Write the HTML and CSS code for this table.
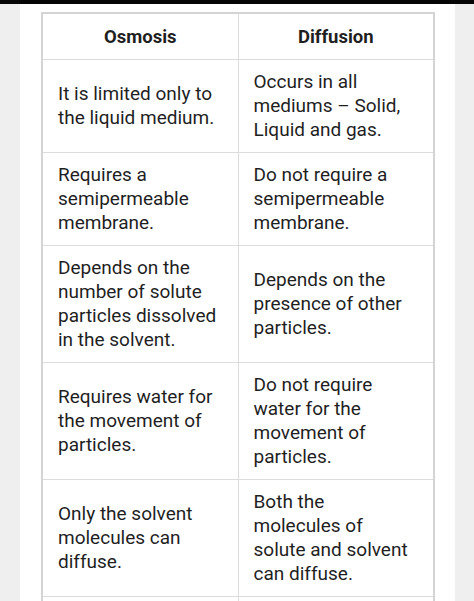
FILE: index.html
```html
<!DOCTYPE html>
<html>
<head>
<meta charset="utf-8">
<link rel="stylesheet" href="styles.css">
</head>
<body>
<div class="topbar"></div>
<div class="page">
  <div class="sheet">
    <table class="cmp">
      <thead>
        <tr><th>Osmosis</th><th>Diffusion</th></tr>
      </thead>
      <tbody>
        <tr>
          <td>It is limited only to<br>the liquid medium.</td>
          <td>Occurs in all<br>mediums – Solid,<br>Liquid and gas.</td>
        </tr>
        <tr>
          <td>Requires a<br>semipermeable<br>membrane.</td>
          <td>Do not require a<br>semipermeable<br>membrane.</td>
        </tr>
        <tr>
          <td>Depends on the<br>number of solute<br>particles dissolved<br>in the solvent.</td>
          <td>Depends on the<br>presence of other<br>particles.</td>
        </tr>
        <tr>
          <td>Requires water for<br>the movement of<br>particles.</td>
          <td>Do not require<br>water for the<br>movement of<br>particles.</td>
        </tr>
        <tr>
          <td>Only the solvent<br>molecules can<br>diffuse.</td>
          <td>Both the<br>molecules of<br>solute and solvent<br>can diffuse.</td>
        </tr>
        <tr class="cut"><td></td><td></td></tr>
      </tbody>
    </table>
  </div>
</div>
</body>
</html>
```
FILE: styles.css
```css
html, body {
  margin: 0;
  padding: 0;
  height: 100%;
  overflow: hidden;
}
body {
  background: #efefef;
  font-family: Roboto, "Noto Sans", "Liberation Sans", sans-serif;
  color: #1f1f1f;
}
.topbar {
  height: 4px;
  background: #050505;
}
.page {
  padding: 0 19px 0 20px;
}
.sheet {
  background: #fff;
  padding: 8px 21px 0 21px;
  height: 589px;
  overflow: hidden;
}
.cmp {
  width: 394px;
  border-collapse: collapse;
  border: 2px solid #d4d4d4;
  table-layout: fixed;
}
.cmp th, .cmp td {
  border: 1px solid #dcdcdc;
  width: 50%;
  font-size: 19px;
  line-height: 24px;
  vertical-align: middle;
}
.cmp th {
  font-weight: 700;
  font-size: 18.5px;
  text-align: center;
  padding: 11px 10px 10px;
}
.cmp td {
  text-align: left;
  padding: 10px 8px 10px 15px;
  white-space: nowrap;
}
.cmp td + td {
  padding-left: 15px;
  padding-right: 8px;
}
.cmp .cut td {
  height: 20px;
  padding: 0;
}
```
